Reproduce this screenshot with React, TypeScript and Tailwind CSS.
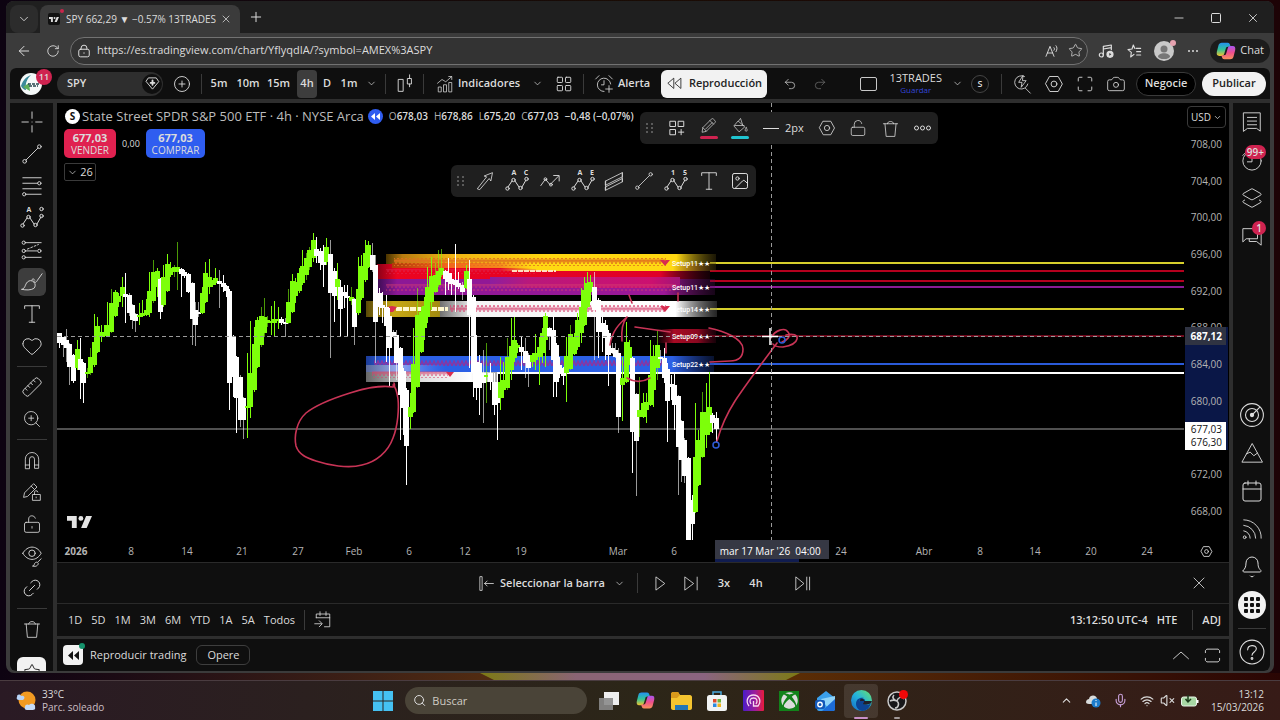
import type { ReactNode } from 'react';
import {
  ArrowLeft, Bell, Calendar, Camera, ChevronDown, ChevronUp, CirclePlus, Heart, Image, Layers2,
  LayoutGrid, Link2, LockOpen, Maximize, Mic, Minus, Plus, Redo2, RotateCw, Ruler,
  Search, Square, Star, Undo2, VolumeX, Wifi, X, ZoomIn,
} from 'lucide-react';
import { FaXbox } from 'react-icons/fa';

// x, high, body top, body bottom, low, 1 = up / 0 = down
type Candle = [number, number, number, number, number, 0 | 1];

const CANDLES: Candle[] = [
  [59, 333, 333, 343, 348, 0], [63, 337, 337, 345, 357, 0], [66, 329, 340, 348, 362, 0],
  [69, 343, 344, 367, 385, 0], [73, 354, 355, 381, 383, 0], [77, 340, 349, 368, 370, 1],
  [80, 338, 359, 370, 399, 0], [83, 362, 363, 383, 403, 0], [87, 368, 372, 374, 378, 1],
  [90, 348, 357, 373, 375, 1], [94, 314, 342, 365, 367, 1], [97, 317, 326, 352, 353, 1],
  [101, 325, 332, 337, 342, 1], [104, 325, 333, 335, 337, 1], [107, 302, 325, 336, 337, 1],
  [111, 289, 303, 332, 333, 1], [115, 290, 292, 316, 317, 1], [118, 293, 296, 302, 307, 1],
  [122, 277, 287, 296, 307, 1], [125, 273, 294, 297, 323, 0], [129, 293, 295, 313, 316, 0],
  [132, 304, 305, 320, 329, 0], [135, 313, 314, 321, 332, 0], [139, 303, 315, 317, 325, 1],
  [142, 300, 313, 316, 317, 1], [146, 299, 310, 315, 316, 1], [149, 272, 291, 313, 317, 1],
  [153, 260, 272, 301, 303, 1], [157, 268, 271, 287, 297, 1], [160, 278, 279, 312, 319, 0],
  [163, 265, 277, 305, 307, 1], [167, 254, 264, 291, 292, 1], [170, 262, 268, 275, 277, 1],
  [174, 265, 267, 272, 277, 1], [177, 242, 267, 272, 290, 1], [181, 268, 269, 274, 297, 0],
  [184, 270, 272, 276, 278, 0], [188, 273, 274, 292, 293, 0], [192, 282, 283, 319, 345, 0],
  [195, 302, 310, 325, 346, 0], [198, 302, 312, 313, 317, 0], [202, 287, 293, 313, 314, 1],
  [205, 262, 273, 302, 303, 1], [209, 259, 277, 287, 294, 1], [212, 280, 283, 285, 287, 1],
  [215, 268, 278, 283, 285, 1], [219, 270, 281, 284, 308, 0], [223, 275, 283, 287, 292, 0],
  [226, 285, 286, 291, 297, 0], [229, 289, 291, 383, 410, 0], [233, 335, 337, 377, 397, 0],
  [236, 356, 357, 398, 433, 0], [240, 375, 377, 420, 427, 0], [243, 397, 398, 420, 439, 0],
  [247, 353, 406, 408, 438, 1], [250, 321, 373, 407, 418, 1], [254, 327, 344, 390, 392, 1],
  [257, 317, 320, 367, 368, 1], [261, 307, 316, 345, 347, 1], [264, 298, 317, 333, 337, 1],
  [267, 316, 320, 323, 327, 1], [271, 306, 321, 323, 335, 1], [274, 301, 319, 323, 336, 1],
  [278, 307, 319, 321, 329, 1], [281, 317, 319, 323, 325, 0], [285, 318, 322, 324, 337, 0],
  [288, 289, 302, 323, 324, 1], [292, 274, 281, 312, 313, 1], [295, 278, 282, 296, 303, 1],
  [299, 268, 273, 291, 293, 1], [302, 250, 266, 283, 285, 1], [306, 253, 258, 275, 280, 1],
  [309, 247, 250, 267, 270, 1], [313, 233, 240, 258, 262, 1], [316, 237, 249, 256, 263, 0],
  [320, 248, 251, 263, 270, 0], [323, 245, 253, 265, 287, 0], [326, 238, 247, 262, 265, 1],
  [330, 240, 254, 293, 358, 0], [334, 268, 271, 296, 322, 0], [337, 263, 279, 287, 300, 1],
  [340, 280, 287, 309, 337, 0], [344, 285, 292, 296, 308, 0], [347, 285, 296, 298, 336, 0],
  [351, 287, 297, 301, 305, 1], [354, 298, 299, 327, 345, 0], [358, 257, 289, 313, 315, 1],
  [361, 255, 266, 298, 300, 1], [365, 240, 253, 280, 282, 1], [368, 241, 245, 267, 268, 1],
  [372, 243, 255, 270, 272, 0], [375, 255, 265, 322, 363, 0], [379, 288, 293, 307, 315, 0],
  [382, 292, 305, 308, 323, 0], [386, 295, 307, 326, 362, 0], [389, 308, 316, 348, 387, 0],
  [393, 330, 332, 337, 338, 0], [396, 330, 335, 363, 380, 0], [400, 347, 348, 395, 440, 0],
  [403, 368, 371, 408, 435, 0], [406, 388, 390, 446, 485, 0], [410, 393, 407, 417, 429, 1],
  [413, 328, 364, 412, 413, 1], [417, 288, 315, 387, 388, 1], [421, 307, 312, 352, 353, 1],
  [424, 297, 306, 328, 340, 1], [427, 267, 287, 317, 323, 1], [431, 257, 276, 302, 310, 1],
  [435, 263, 275, 292, 293, 1], [438, 250, 271, 285, 287, 1], [441, 249, 268, 275, 277, 1],
  [445, 270, 271, 279, 295, 0], [448, 258, 273, 282, 290, 0], [451, 273, 279, 284, 295, 0],
  [455, 244, 280, 285, 312, 0], [458, 272, 283, 287, 289, 0], [462, 282, 285, 292, 300, 0],
  [466, 265, 271, 288, 289, 1], [469, 260, 279, 315, 368, 0], [473, 295, 297, 373, 397, 0],
  [476, 335, 362, 388, 400, 0], [479, 355, 363, 388, 415, 0], [483, 350, 373, 383, 423, 0],
  [486, 343, 375, 377, 403, 1], [490, 363, 373, 382, 390, 0], [494, 373, 382, 405, 415, 0],
  [497, 373, 393, 403, 440, 0], [500, 357, 382, 398, 410, 1], [503, 362, 380, 390, 398, 1],
  [507, 338, 357, 388, 390, 1], [511, 318, 346, 370, 380, 1], [514, 317, 340, 358, 362, 1],
  [517, 343, 345, 348, 353, 1], [521, 337, 347, 352, 370, 0], [525, 338, 351, 363, 378, 0],
  [528, 353, 355, 368, 387, 0], [532, 353, 355, 362, 367, 1], [535, 334, 353, 360, 370, 1],
  [539, 337, 347, 357, 385, 1], [542, 328, 333, 353, 363, 1], [545, 313, 316, 340, 367, 1],
  [549, 327, 328, 337, 350, 0], [553, 316, 330, 360, 397, 0], [556, 343, 345, 382, 397, 0],
  [559, 357, 365, 373, 378, 0], [563, 367, 368, 376, 385, 0], [566, 337, 356, 373, 402, 1],
  [570, 325, 334, 369, 370, 1], [574, 333, 337, 354, 355, 1], [577, 313, 320, 347, 350, 1],
  [581, 288, 307, 333, 343, 1], [584, 277, 290, 325, 326, 1], [587, 272, 283, 307, 308, 1],
  [590, 275, 282, 292, 302, 1], [594, 272, 287, 310, 360, 0], [598, 298, 300, 332, 358, 0],
  [602, 312, 323, 332, 352, 0], [605, 320, 325, 338, 360, 0], [608, 330, 333, 355, 386, 0],
  [612, 343, 348, 353, 354, 0], [615, 343, 350, 357, 358, 0], [618, 348, 353, 417, 433, 0],
  [622, 357, 378, 385, 421, 1], [626, 322, 342, 382, 383, 1], [629, 340, 347, 363, 365, 1],
  [632, 357, 358, 432, 473, 0], [636, 393, 394, 441, 496, 0], [639, 377, 410, 417, 437, 1],
  [643, 393, 403, 417, 418, 1], [646, 393, 402, 410, 423, 1], [650, 340, 375, 405, 406, 1],
  [653, 345, 356, 390, 407, 1], [657, 330, 345, 368, 380, 1], [660, 350, 357, 359, 363, 0],
  [664, 348, 358, 378, 383, 0], [667, 363, 369, 401, 442, 0], [671, 375, 384, 387, 400, 0],
  [674, 373, 385, 405, 430, 0], [678, 395, 396, 447, 495, 0], [681, 420, 421, 460, 482, 0],
  [684, 438, 440, 476, 483, 0], [688, 457, 458, 540, 540, 0], [692, 495, 500, 524, 540, 0],
  [695, 403, 457, 512, 513, 1], [698, 430, 440, 485, 486, 1], [702, 392, 412, 457, 458, 1],
  [706, 383, 412, 435, 448, 1], [709, 372, 407, 432, 435, 1], [712, 413, 415, 423, 433, 0],
  [716, 412, 418, 429, 442, 0],
];

const LEVELS = [
  { y: 263, color: '#d6cf2c' }, { y: 271, color: '#b4001e' }, { y: 281, color: '#b4001e' },
  { y: 287, color: '#8a1c94' }, { y: 309, color: '#d6cf2c' }, { y: 336, color: '#6e0a1c' },
  { y: 364, color: '#2a5ad8' }, { y: 373, color: '#ffffff' },
];

const PRICES: [string, number][] = [
  ['708,00', 144], ['704,00', 181], ['700,00', 217], ['696,00', 254], ['692,00', 291],
  ['688,00', 327], ['684,00', 364], ['680,00', 401], ['672,00', 474], ['668,00', 511],
];

const TIMES: [string, number][] = [
  ['2026', 76], ['8', 131], ['14', 187], ['21', 242], ['27', 298], ['Feb', 354], ['6', 409],
  ['12', 465], ['19', 521], ['Mar', 618], ['6', 674], ['24', 841], ['Abr', 924], ['8', 980],
  ['14', 1035], ['20', 1091], ['24', 1147],
];

const SETUPS: [string, number][] = [
  ['Setup11★★', 266], ['Setup11★★', 290], ['Setup14★★', 312], ['Setup09★★', 339], ['Setup22★★', 367],
];

function Glyph({ children, size = 22, stroke = 1 }: { children: ReactNode; size?: number; stroke?: number }) {
  return (
    <svg className="shrink-0" width={size} height={size} viewBox="0 0 24 24" fill="none" stroke="currentColor" strokeWidth={stroke} strokeLinejoin="round" strokeLinecap="round" aria-hidden="true">
      {children}
    </svg>
  );
}

function Sep() {
  return <span className="h-5 w-px shrink-0 bg-[#3a3a3a]" />;
}

const Hexagon = ({ size = 20 }: { size?: number }) => (
  <Glyph size={size} stroke={size < 16 ? 1.6 : 1.1}><path d="M7 3h10l5 9-5 9H7l-5-9z" /><circle cx="12" cy="12" r="3.500" /></Glyph>
);
const TrendLine = ({ size = 22 }: { size?: number }) => (
  <Glyph size={size}><path d="M5.500 18.500 18.500 5.500" /><circle cx="4" cy="20" r="2" /><circle cx="20" cy="4" r="2" /></Glyph>
);
const Pattern = ({ marks }: { marks: string }) => (
  <Glyph size={24}>
    <path d="M3 18 7 12M10 12l4 6M17 18l4-7" />
    <circle cx="2.500" cy="19.500" r="1.700" /><circle cx="8.500" cy="11" r="1.700" />
    <circle cx="15.500" cy="19" r="1.700" /><circle cx="21.500" cy="10" r="1.700" />
    <g fill="currentColor" stroke="none" fontSize="7" fontWeight="bold" textAnchor="middle">
      <text x="9" y="6">{marks[0]}</text>
      {marks[1] && <text x="21" y="6">{marks[1]}</text>}
    </g>
    {!marks[1] && <circle cx="21.500" cy="3" r="1.700" />}
  </Glyph>
);
const Fib = () => (
  <Glyph><path d="M2 3h20M2 9h16M2 15h20M6 21h16" /><circle cx="20" cy="9" r="1.800" /><circle cx="3.500" cy="21" r="1.800" /></Glyph>
);
const Forecast = () => (
  <Glyph>
    <path d="M5 4h17M5 20h17M5 13h12" /><path d="M7 11l12-5" strokeDasharray="2 2" />
    <circle cx="3" cy="4" r="1.800" /><circle cx="3" cy="13" r="1.800" /><circle cx="3" cy="20" r="1.800" /><circle cx="20" cy="13" r="1.800" />
  </Glyph>
);
const BrushIcon = ({ size = 24 }: { size?: number }) => (
  <Glyph size={size}>
    <path d="M1 20c4-1 3-5 6-8 2-2 5-2 7 0 2 2 2 5 0 7-3 2-9 2-13 1z" /><path d="M14 11c1 3 3 1 4-1l5-7M12 10c0-2 2-2 3 0" />
  </Glyph>
);
const TextIcon = () => <Glyph size={22}><path d="M4 6V3h16v3M12 3v18M9 21h6" /></Glyph>;
const TrashIcon = ({ size = 20 }: { size?: number }) => (
  <Glyph size={size}><path d="M3 6h18M8 6c0-4 8-4 8 0M5 6l1.500 16h11L19 6" /></Glyph>
);
const PencilIcon = ({ size = 20 }: { size?: number }) => (
  <Glyph size={size}><path d="M3 21l1-6L16 3c1-1 2-1 3 0l2 2c1 1 1 2 0 3L9 20zM4 15l5 5M14 5l5 5M8 17l9-9" /></Glyph>
);
const Handle = () => (
  <svg width="8" height="12" viewBox="0 0 8 12" fill="#5a5a5a" aria-hidden="true">
    {[1, 5, 9].map(y => <g key={y}><rect x="0" y={y} width="2" height="2" /><rect x="5" y={y} width="2" height="2" /></g>)}
  </svg>
);

function TvLogo({ width }: { width: number }) {
  return (
    <svg width={width} viewBox="0 0 36 18" fill="currentColor" aria-hidden="true">
      <path d="M0 0h14v18H7V7H0zM28 18h-8L27.500 0H36z" /><circle cx="20" cy="3.500" r="3.500" />
    </svg>
  );
}

const CopilotIcon = ({ size = 20 }: { size?: number }) => (
  <svg width={size} height={size} viewBox="0 0 24 24" aria-hidden="true">
    <defs>
      <linearGradient id="copA" x1="0" y1="0" x2="0" y2="1"><stop stopColor="#2491f0" /><stop offset=".5" stopColor="#2fc39b" /><stop offset="1" stopColor="#f2c32c" /></linearGradient>
      <linearGradient id="copB" x1="0" y1="0" x2="0" y2="1"><stop stopColor="#a855f0" /><stop offset=".5" stopColor="#ef4f8c" /><stop offset="1" stopColor="#f9915a" /></linearGradient>
    </defs>
    <path d="M7 2h7c2 0 2.500 1.500 3 3l.5 2h-3c-2 0-2.500 1-3 3l-1.500 5c-.5 2-1.500 3-3 3H4c-3 0-3.500-2-3-5L3 5c.500-2 2-3 4-3z" fill="url(#copA)" />
    <path d="M17 22h-7c-2 0-2.500-1.500-3-3l-.5-2h3c2 0 2.500-1 3-3L14 9c.5-2 1.500-3 3-3h3c3 0 3.500 2 3 5l-2 8c-.5 2-2 3-4 3z" fill="url(#copB)" />
  </svg>
);

function TitleBar() {
  return (
    <div className="flex h-8 items-end bg-[#1f1f1f]">
      <button aria-label="Pestañas" className="ml-1 flex size-7 items-center justify-center rounded-lg bg-[#2c2c2c]"><ChevronDown size={14} strokeWidth={1.500} /></button>
      <div className="ml-0.5 flex h-7 w-50 items-center rounded-t-lg bg-[#3b3b3b] pl-2">
        <span className="relative flex size-3 items-center justify-center rounded-xs bg-[#111]">
          <TvLogo width={10} />
          <span className="absolute -top-1 -right-1 size-1 rounded-full bg-[#c8254b]" />
        </span>
        <span className="ml-1.5 flex-1 whitespace-nowrap text-[10px]">SPY 662,29 ▼ −0.57% 13TRADES</span>
        <button aria-label="Cerrar pestaña" className="mr-2"><X size={12} strokeWidth={1.500} /></button>
      </div>
      <button aria-label="Nueva pestaña" className="mb-2 ml-2"><Plus size={16} strokeWidth={1.500} /></button>
      <div className="mb-2 ml-auto flex items-center gap-6 pr-3.5">
        <button aria-label="Minimizar"><Minus size={14} strokeWidth={1.500} /></button>
        <button aria-label="Maximizar"><Square size={12} strokeWidth={2} /></button>
        <button aria-label="Cerrar"><X size={14} strokeWidth={1.500} /></button>
      </div>
    </div>
  );
}

function AddressBar() {
  return (
    <div className="flex h-[35px] items-center pr-1">
      <button aria-label="Atrás" className="ml-2.5"><ArrowLeft size={16} strokeWidth={1.500} /></button>
      <button aria-label="Recargar" className="ml-3.5"><RotateCw size={14} strokeWidth={1.500} /></button>
      <div className="ml-2.5 flex h-7 flex-1 items-center rounded-full border border-[#727272] bg-[#333] pr-1 pl-1.5">
        <Glyph size={14} stroke={1.700}><rect x="3" y="9" width="18" height="13" rx="3" /><path d="M7 9V7a5 5 0 0 1 10 0v2M12 15v1" /></Glyph>
        <input aria-label="Dirección" readOnly value="https://es.tradingview.com/chart/YflyqdIA/?symbol=AMEX%3ASPY" className="ml-1.5 flex-1 bg-transparent text-[11px] outline-none" />
        <Glyph size={16} stroke={1.400}><path d="M3 20 9 5l6 15M5 15h8M15 7c1 1 1 3 0 4M18 4c2 2 2 6 0 9" /></Glyph>
        <Star size={15} strokeWidth={1.200} className="ml-2" />
      </div>
      <div className="flex items-center gap-3 pl-2.5">
        <Glyph size={16} stroke={1.800}><path d="M8 18V5l12-2v7M8 9l12-2" /><circle cx="5" cy="18" r="3" /><circle cx="18" cy="17" r="4.500" fill="currentColor" /><path d="M17 15l3 2-3 2z" fill="#333" stroke="none" /></Glyph>
        <Glyph size={16} stroke={1.700}><path d="M15 8h7M16 13h6M16 18h6M12 17l-5 4 1-7-5-4 6-1 2-6 2 5" /></Glyph>
        <span className="relative flex size-5 items-center justify-center overflow-visible rounded-full bg-[#c9c9c9]">
          <svg width="16" height="16" viewBox="0 0 16 16" fill="#777"><circle cx="8" cy="6" r="3.500" /><path d="M2 14c0-5 12-5 12 0a9 9 0 0 1-12 0z" /></svg>
          <span className="absolute -top-px -right-0.5 size-1.5 rounded-full bg-[#e6a3b0]" />
        </span>
        <svg width="14" height="4" fill="currentColor"><circle cx="3" cy="2" r="1" /><circle cx="7" cy="2" r="1" /><circle cx="11" cy="2" r="1" /></svg>
      </div>
      <button className="ml-2.5 flex h-6 items-center gap-1 rounded-full bg-[#1c1c1c] px-1.5 text-[11px]"><CopilotIcon /> Chat</button>
    </div>
  );
}

function TopToolbar() {
  return (
    <div className="flex h-[31px] items-center rounded-t-md bg-[#0f0f0f] pr-1 text-[11px] font-semibold">
      <span className="relative ml-2.5 size-[22px] shrink-0 rounded-full bg-[#f4f8f8]">
        <svg viewBox="0 0 22 22" width="22" height="22" aria-hidden="true">
          <path d="M1 13c2-6 5-9 10-11-4 4-6 8-5 15-2 0-4-2-5-4z" fill="#3c8a9b" /><path d="M3 14l6-4 1 8z" fill="#5fae5a" />
          <path d="M8 11h11M9 13h9" stroke="#24464e" strokeWidth="1.500" strokeDasharray="3 1" />
        </svg>
        <span className="absolute -top-1 left-4 flex size-4 items-center justify-center rounded-full bg-[#cf2350] text-[9px]">11</span>
      </span>
      <button className="ml-[15px] flex h-6 w-[106px] shrink-0 items-center justify-between rounded-full bg-[#2e2e2e] pr-px pl-2.5">
        SPY
        <span className="flex size-5 items-center justify-center rounded-full bg-[#0f0f0f]">
          <Glyph size={15} stroke={1.500}><path d="M6 3h12l4 6-10 12L2 9z" /><path d="M12 7v7M9 11h6" strokeWidth="3" /></Glyph>
        </span>
      </button>
      <button aria-label="Comparar" className="flex w-[38px] shrink-0 justify-center"><CirclePlus size={18} strokeWidth={1.200} /></button>
      <Sep />
      <button className="w-[34px]">5m</button>
      <button className="w-6">10m</button>
      <button className="w-[37px]">15m</button>
      <button className="h-7 w-5 rounded-sm bg-[#3d3d3d]">4h</button>
      <button className="w-5">D</button>
      <button className="w-6">1m</button>
      <button aria-label="Intervalos" className="flex w-6 justify-center pr-1"><ChevronDown size={11} strokeWidth={1.500} /></button>
      <Sep />
      <button aria-label="Tipo de gráfico" className="flex w-[37px] justify-center">
        <Glyph size={22}><path d="M5 7h5v13H5zM15 6h4v6h-4zM17 6V2M17 12v3" /></Glyph>
      </button>
      <Sep />
      <button className="flex w-[95px] shrink-0 items-center gap-1 pl-3 whitespace-nowrap">
        <Glyph size={18}><path d="M3 22v-6h4v6zM10 22v-9h4v9zM17 22V10h4v12zM2 11l6-5 5 3 8-7M17 2h4v4" /></Glyph>
        Indicadores
      </button>
      <button aria-label="Favoritos" className="flex w-9 shrink-0 justify-center"><ChevronDown size={11} strokeWidth={1.500} /></button>
      <button aria-label="Plantillas" className="flex w-7 shrink-0 justify-start"><LayoutGrid size={18} strokeWidth={1.200} /></button>
      <Sep />
      <button className="flex w-[77px] shrink-0 items-center gap-1 pl-2.5 whitespace-nowrap">
        <Glyph size={20}><path d="M20 12a8 8 0 1 0-8 9M12 8v5H9M2 6l4-4M22 6l-4-4M18 14v8M14 18h8" /></Glyph>
        Alerta
      </button>
      <button className="flex h-7 w-[106px] shrink-0 items-center justify-center gap-1.5 rounded-md bg-[#f2f2f2] text-[#222]">
        <Glyph size={17} stroke={1.200}><path d="M11 5v14l-8-7zM21 5v14l-8-7z" /></Glyph>
        Reproducción
      </button>
      <span className="ml-1.5"><Sep /></span>
      <button aria-label="Deshacer" className="ml-2.5"><Undo2 size={14} strokeWidth={1.200} /></button>
      <button aria-label="Rehacer" className="ml-4 text-[#777]"><Redo2 size={14} strokeWidth={1.200} /></button>

      <div className="ml-auto flex items-center">
        <button aria-label="Diseño" className="mr-3 h-3.5 w-[17px] rounded-xs border border-[#c8c8c8]" />
        <button className="flex flex-col items-center font-medium">
          <span className="leading-3">13TRADES</span>
          <span className="text-[8px] leading-[11px] font-normal text-[#3346d8]">Guardar</span>
        </button>
        <ChevronDown size={11} strokeWidth={1.500} className="mr-2 ml-2.5" />
        <span className="mr-3 flex size-[18px] items-center justify-center rounded-full border border-[#444] text-[9px]">S</span>
        <Sep />
        <div className="flex items-center gap-3 px-2.5">
          <button aria-label="Búsqueda rápida"><Glyph size={20}><path d="M15 3a8 8 0 1 0 4 9M16 17l6 6M13 2l-5 8h4l-1 6 6-8h-4z" /></Glyph></button>
          <button aria-label="Ajustes"><Hexagon /></button>
          <button aria-label="Pantalla completa"><Maximize size={18} strokeWidth={1.200} /></button>
          <button aria-label="Captura"><Camera size={20} strokeWidth={1} /></button>
        </div>
        <button className="h-6 w-15 rounded-full border border-[#3a3a3a] bg-black text-center">Negocie</button>
        <button className="ml-1.5 h-6 w-16 rounded-full bg-[#f2f2f2] text-center text-[#222]">Publicar</button>
      </div>
    </div>
  );
}

function Tool({ label, active, children }: { label: string; active?: boolean; children: ReactNode }) {
  return (
    <button aria-label={label} className="flex h-8 w-full shrink-0 items-center justify-center">
      {active ? <span className="flex size-7 items-center justify-center rounded-md bg-[#3d3d3d]">{children}</span> : children}
    </button>
  );
}

function LeftTools() {
  const rule = <span className="my-1 h-px w-[30px] shrink-0 bg-[#3a3a3a]" />;
  return (
    <aside className="flex w-[43px] shrink-0 flex-col items-center overflow-hidden rounded-bl-md bg-[#0f0f0f] pt-[3px]">
      <Tool label="Cruz"><Glyph><path d="M12 1v7M12 16v7M1 12h7M16 12h7M12 12h.1" /></Glyph></Tool>
      <Tool label="Línea de tendencia"><TrendLine /></Tool>
      <Tool label="Fibonacci"><Fib /></Tool>
      <Tool label="Patrones"><Pattern marks="A" /></Tool>
      <Tool label="Previsión"><Forecast /></Tool>
      <Tool label="Pincel" active><BrushIcon size={22} /></Tool>
      <Tool label="Texto"><TextIcon /></Tool>
      <Tool label="Iconos"><Heart size={22} strokeWidth={1} /></Tool>
      {rule}
      <Tool label="Medir"><Ruler size={22} strokeWidth={1} className="-scale-x-100" /></Tool>
      <Tool label="Acercar"><ZoomIn size={20} strokeWidth={1} /></Tool>
      {rule}
      <Tool label="Imán"><Glyph size={20}><path d="M4 22V11a8 8 0 0 1 16 0v11h-5V11a3 3 0 0 0-6 0v11zM4 18h5M15 18h5" /></Glyph></Tool>
      <Tool label="Modo dibujo"><Glyph size={20}><path d="M2 18l1-5L14 2l4 4L7 17zM11 5l4 4M13 15h9v7h-9zM15 15v-2a2 2 0 0 1 4-1M17 18v1" /></Glyph></Tool>
      <Tool label="Bloquear"><Glyph size={20}><rect x="3" y="10" width="18" height="12" rx="2" /><path d="M8 10V6c0-5 7-5 8-1M12 15v2" /></Glyph></Tool>
      <Tool label="Ocultar"><Glyph size={22}><path d="M2 9c5-9 15-9 20 0-5 9-15 9-20 0z" /><circle cx="12" cy="9" r="3.500" /><path d="M13 23c2 0 1-3 3-4s4 1 2 3-3 1-5 1zM19 18l3-3" /></Glyph></Tool>
      <Tool label="Sincronizar"><Link2 size={22} strokeWidth={1} className="-rotate-45" /></Tool>
      {rule}
      <Tool label="Eliminar"><TrashIcon /></Tool>
      <button aria-label="Favoritos" className="mt-3 flex h-7 w-[29px] shrink-0 justify-center rounded-md bg-[#f2f2f2] pt-1.5 text-[#111]"><Star size={18} strokeWidth={1.200} /></button>
    </aside>
  );
}

function SideItem({ label, badge, children }: { label: string; badge?: string; children: ReactNode }) {
  return (
    <button aria-label={label} className="relative flex h-[38px] w-full shrink-0 items-center justify-center">
      {children}
      {badge && <span className="absolute top-1 right-1 flex h-3.5 min-w-3.5 items-center justify-center rounded-full bg-[#cf2350] px-0.5 text-[10px] font-semibold">{badge}</span>}
    </button>
  );
}

function RightTools() {
  return (
    <aside className="flex w-[37px] shrink-0 flex-col items-center rounded-br-md bg-[#0f0f0f]">
      <SideItem label="Lista"><Glyph><path d="M3 2h18v20l-4-3h-10l-4 3zM7 7h10M7 11h10M7 15h10" /></Glyph></SideItem>
      <SideItem label="Alertas" badge="99+"><Glyph><circle cx="12" cy="13" r="10" /><path d="M12 8v6H7M2 7l5-5" /></Glyph></SideItem>
      <SideItem label="Capas"><Layers2 size={22} strokeWidth={1} /></SideItem>
      <SideItem label="Chats" badge="1"><Glyph><path d="M2 18V4h16v11H6zM9 15v3h8l5 4V9h-4" /></Glyph></SideItem>
      <span className="flex-1" />
      <SideItem label="Radar"><Glyph size={26}><circle cx="12" cy="12" r="10.500" /><circle cx="12" cy="12" r="6" /><circle cx="12" cy="12" r="1.500" fill="currentColor" /><path d="M12 12l7-7" /></Glyph></SideItem>
      <SideItem label="Pine"><Glyph><path d="M12 2 1 22h22zM6 13l4-2 4 4 4-3" /></Glyph></SideItem>
      <SideItem label="Calendario"><Calendar size={24} strokeWidth={1} /></SideItem>
      <SideItem label="Noticias"><Glyph><path d="M3 2a19 19 0 0 1 19 20M3 8a14 14 0 0 1 13 14M3 14a8 8 0 0 1 7 8" /><circle cx="4" cy="21" r="1.500" /></Glyph></SideItem>
      <SideItem label="Notificaciones"><Bell size={24} strokeWidth={1} /></SideItem>
      <SideItem label="Aplicaciones">
        <svg width="28" height="28" viewBox="0 0 28 28"><circle cx="14" cy="14" r="14" fill="#f2f2f2" />
          {[8, 14, 20].map(y => [8, 14, 20].map(x => <rect key={`${x}-${y}`} x={x - 2} y={y - 2} width="4" height="4" rx="1" fill="#111" />))}
        </svg>
      </SideItem>
      <span className="my-1 h-px w-7 shrink-0 bg-[#3a3a3a]" />
      <SideItem label="Ayuda"><Glyph size={26}><circle cx="12" cy="12" r="11" /><path d="M8 10c0-5 8-5 8-1 0 3-4 3-4 6" /><circle cx="12" cy="18" r=".800" /></Glyph></SideItem>
    </aside>
  );
}

function Plot() {
  return (
    <svg className="block h-full w-full" aria-label="SPY 4h">
      <defs>
        <pattern id="zigPink" width="4" height="8" patternUnits="userSpaceOnUse"><path d="M0 6 2 1 4 6M0 8 2 4 4 8" stroke="#d8406e" fill="none" /></pattern>
        <pattern id="zigOrange" width="4" height="8" patternUnits="userSpaceOnUse"><path d="M0 6 2 1 4 6M0 8 2 4 4 8" stroke="#e0701c" fill="none" /></pattern>
        <pattern id="zigViolet" width="4" height="8" patternUnits="userSpaceOnUse"><path d="M0 6 2 1 4 6" stroke="#8a35a0" strokeWidth="1.500" fill="none" /></pattern>
        <linearGradient id="gold"><stop stopColor="#4a3400" /><stop offset=".05" stopColor="#b87c10" /><stop offset=".2" stopColor="#f0b414" /><stop offset=".5" stopColor="#ffd812" /><stop offset=".88" stopColor="#ffd812" /><stop offset="1" stopColor="#5a4c10" stopOpacity=".3" /></linearGradient>
        <linearGradient id="goldEnd"><stop stopColor="#ffd812" stopOpacity="0" /><stop offset=".15" stopColor="#ffd812" /><stop offset=".8" stopColor="#ffd812" /><stop offset="1" stopColor="#5a4c10" stopOpacity=".3" /></linearGradient>
        <linearGradient id="orange"><stop stopColor="#b03c08" /><stop offset=".4" stopColor="#f4641c" /><stop offset="1" stopColor="#f4a01c" /></linearGradient>
        <linearGradient id="red"><stop stopColor="#8a0018" /><stop offset=".06" stopColor="#ec0420" /><stop offset=".85" stopColor="#e00028" /><stop offset="1" stopColor="#60001c" stopOpacity=".2" /></linearGradient>
        <linearGradient id="purple"><stop stopColor="#3c0c54" /><stop offset=".06" stopColor="#8c1896" /><stop offset=".85" stopColor="#9c1896" /><stop offset="1" stopColor="#4c1050" stopOpacity=".3" /></linearGradient>
        <linearGradient id="magenta"><stop stopColor="#8c1ea0" /><stop offset=".2" stopColor="#b8187c" /><stop offset=".85" stopColor="#cc1070" /><stop offset="1" stopColor="#a01478" /></linearGradient>
        <linearGradient id="olive"><stop stopColor="#5a4a08" /><stop offset=".3" stopColor="#c8a814" /><stop offset=".8" stopColor="#a48c10" /><stop offset="1" stopColor="#6e6e6e" /></linearGradient>
        <linearGradient id="white"><stop stopColor="#707070" /><stop offset=".12" stopColor="#f4f4f4" /><stop offset=".85" stopColor="#fff" /><stop offset="1" stopColor="#777" stopOpacity=".3" /></linearGradient>
        <linearGradient id="blue"><stop stopColor="#1c3c98" /><stop offset=".06" stopColor="#2c60e6" /><stop offset=".88" stopColor="#2c60e6" /><stop offset="1" stopColor="#1c3c98" stopOpacity=".3" /></linearGradient>
        <linearGradient id="haze"><stop stopColor="#5a6a9a" /><stop offset=".4" stopColor="#98acf0" /><stop offset="1" stopColor="#5880ee" stopOpacity="0" /></linearGradient>
        <linearGradient id="gray"><stop stopColor="#686868" /><stop offset=".35" stopColor="#d8d8d8" /><stop offset=".8" stopColor="#fff" /><stop offset="1" stopColor="#aaa" /></linearGradient>
        <linearGradient id="wine"><stop stopColor="#70001c" stopOpacity="0" /><stop offset=".3" stopColor="#a80a24" /><stop offset=".7" stopColor="#8a0820" /><stop offset="1" stopColor="#50041c" stopOpacity=".3" /></linearGradient>
      </defs>
      <g transform="translate(-57 -103)">
        <g shapeRendering="crispEdges">
          <rect x="57" y="428" width="4000" height="2" fill="#505050" />
          {LEVELS.map(l => <rect key={l.y} x="710" y={l.y - 1} width="4000" height="2" fill={l.color} />)}
        </g>
        {/* zone bands */}
        <rect x="377" y="264" width="333" height="15" fill="url(#red)" />
        <rect x="386" y="254" width="330" height="10" fill="url(#gold)" />
        <rect x="392" y="263" width="140" height="5" fill="url(#orange)" />
        <rect x="500" y="263" width="216" height="8" fill="url(#goldEnd)" />
        <rect x="394" y="258" width="272" height="8" fill="url(#zigOrange)" />
        <rect x="386" y="269" width="150" height="5" fill="url(#zigPink)" opacity=".4" />
        <path d="M512 271h44" stroke="#ffe0c0" strokeWidth="2" strokeDasharray="5 1" />
        <rect x="377" y="279" width="338" height="16" fill="url(#purple)" />
        <rect x="490" y="277" width="190" height="11" fill="url(#magenta)" />
        <rect x="386" y="284" width="290" height="7" fill="url(#zigPink)" opacity=".5" />
        <rect x="366" y="301" width="90" height="16" fill="url(#olive)" />
        <rect x="440" y="301" width="277" height="16" fill="url(#white)" />
        <path d="M396 309h52" stroke="#fff8d0" strokeWidth="4" strokeDasharray="6 1" />
        <path d="M387 307l5-1 5 1-4 5h-3z" fill="#d82c50" />
        <rect x="450" y="305" width="216" height="8" fill="url(#zigPink)" opacity=".8" />
        <rect x="366" y="356" width="348" height="16" fill="url(#blue)" />
        <rect x="374" y="359" width="292" height="7" fill="url(#zigViolet)" />
        <rect x="366" y="365" width="80" height="8" fill="url(#haze)" />
        <rect x="366" y="372" width="131" height="10" fill="url(#gray)" />
        <rect x="372" y="371" width="76" height="7" fill="url(#zigPink)" opacity=".7" />
        <rect x="656" y="329" width="60" height="14" fill="url(#wine)" />
        <path d="M497 373H712" stroke="#fff" strokeWidth="2" />
        <g fill="#d82c50">
          <path d="M660 260h4l1 1 1-1h4l-5 6z" /><path d="M660 306h4l1 1 1-1h4l-5 6z" /><path d="M446 372h8l-4 5z" />
        </g>
        <g fill="#fff" fontSize="7" fontWeight="500" fontFamily="Roboto, sans-serif">
          {SETUPS.map(([name, y]) => <text key={y} x="672" y={y}>{name}</text>)}
        </g>
        <g shapeRendering="crispEdges">
          {CANDLES.map(([x, high, top, bottom, low, up]) => (
            <g key={x} fill={up ? '#7dff0a' : '#fff'}>
              <rect x={x} y={high} width="1" height={low - high} opacity={x % 3 === 0 ? 0.6 : 1} />
              <rect x={x - 2} y={top} width="5" height={Math.max(bottom - top, 2)} />
            </g>
          ))}
        </g>
        {/* freehand strokes */}
        <g fill="none" stroke="#c83456" strokeWidth="1.600" strokeLinecap="round">
          <path d="M394 383c1 2 1 3-1 4-14-2-27 1-43 6-16 5-34 12-44 20-10 9-12 24-10 33 3 9 11 12 20 15 12 4 32 8 46 4 14-3 26-13 31-27 5-12 6-30 5-39-1-7-2-12-5-14" />
          <path d="M635 327l35 5M709 328c14 3 34 10 34 21 0 9-5 12-13 12l-20 1" />
          <path d="M627 317c-8 7-15 14-17 28M627 317c-5 6-6 13-5 24M629 295l3 8M678 293v8M666 343v10M627 378c8 5 16 4 23 0" />
          <path d="M717 441c4-14 9-26 18-40 12-18 27-38 42-58M771 338c4-8 14-11 17-6 3 4 0 8-6 10M786 335c7-2 12 0 11 4-1 5-8 7-14 8-5 0-9-1-10-3" />
        </g>
        <g fill="none" stroke="#2f5bd6" strokeWidth="1.500"><circle cx="716" cy="445" r="3" /><circle cx="782" cy="340" r="3" /></g>
        <g stroke="#9a9a9a" strokeDasharray="4 3" shapeRendering="crispEdges">
          <path d="M57 336.500H4000" /><path d="M771.500 103V600" />
        </g>
        <path d="M770 328v17M762 336.500h16" stroke="#fff" strokeWidth="1.500" />
      </g>
    </svg>
  );
}

function Chart() {
  return (
    <section className="relative grid min-h-0 flex-1 grid-cols-[1fr_45px] grid-rows-[1fr_22px] overflow-hidden bg-black">
      <Plot />
      <svg className="h-full w-full" aria-label="Escala de precios">
        <g transform="translate(-1184 -103)" fontSize="10" fill="#b4b4b4">
          <rect x="1185" y="327" width="43" height="123" fill="#0a1747" />
          {PRICES.map(([label, y]) => <text key={label} x="1222" y={y + 4} textAnchor="end">{label}</text>)}
          <rect x="1185" y="327" width="41" height="18" fill="#2f3342" />
          <text x="1222" y="340" textAnchor="end" fill="#fff" fontWeight="bold">687,12</text>
          <rect x="1185" y="422" width="41" height="28" fill="#fff" />
          <text x="1222" y="433" textAnchor="end" fill="#111">677,03</text>
          <text x="1222" y="446" textAnchor="end" fill="#111">676,30</text>
        </g>
      </svg>
      <svg className="h-full w-full" aria-label="Escala de tiempo">
        <g transform="translate(-57 -540)" fontSize="10" textAnchor="middle" fill="#b4b4b4">
          {TIMES.map(([label, x]) => <text key={x} x={x} y="555" fontWeight={label === '2026' ? 700 : 400}>{label}</text>)}
          <rect x="715" y="559" width="84" height="3" fill="#101c50" />
          <rect x="715" y="540" width="114" height="19" fill="#363844" />
          <text x="755" y="555" fill="#fff" fontWeight="500">mar 17 Mar '26</text>
          <text x="808" y="555" fill="#fff" fontWeight="500">04:00</text>
        </g>
      </svg>
      <button aria-label="Ajustes de la escala" className="flex items-center justify-center"><Hexagon size={13} /></button>

      {/* legend */}
      <div className="absolute top-1 left-2 flex items-center text-[11px] whitespace-nowrap">
        <span className="flex size-[15px] items-center justify-center rounded-full bg-white text-[10px] font-bold text-[#111]">S</span>
        <h1 className="ml-0.5 text-[13px] text-[#bcbcbc]">State Street SPDR S&amp;P 500 ETF · 4h · NYSE Arca</h1>
        <span className="ml-1 flex size-[15px] items-center justify-center rounded-full bg-[#2f5df0]">
          <svg width="9" height="7" viewBox="0 0 9 7" fill="#fff"><path d="M4 0v7L0 3.500zM9 0v7L5 3.500z" /></svg>
        </span>
        <p className="ml-1.5 flex gap-1.5 text-[10px] font-semibold">
          {['O678,03', 'H678,86', 'L675,20', 'C677,03'].map(v => <span key={v}><span className="font-normal text-[#b0b0b0]">{v[0]}</span>{v.slice(1)}</span>)}
          <span>−0,48 (−0,07%)</span>
        </p>
      </div>
      <div className="absolute top-[26px] left-[7px] flex items-center text-center text-[10px] leading-3">
        <button className="h-[29px] w-[52px] rounded-[5px] bg-[#e02150]"><b className="block text-[11px]">677,03</b>VENDER</button>
        <span className="w-[30px] text-[9px]">0,00</span>
        <button className="h-[29px] w-[59px] rounded-[5px] bg-[#2f5df0]"><b className="block text-[11px]">677,03</b>COMPRAR</button>
      </div>
      <button className="absolute top-[60px] left-[7px] flex h-[18px] w-8 items-center justify-center gap-0.5 rounded-xs border border-[#3a3a3a] text-[11px]">
        <ChevronDown size={11} strokeWidth={1.500} />26
      </button>
      <span className="absolute bottom-[34px] left-2.5 text-[#e4e4e4]"><TvLogo width={25} /></span>
      <button className="absolute top-[3px] right-[3px] flex h-[22px] w-[39px] items-center justify-between rounded-sm border border-[#3a3a3a] bg-black px-[3px] text-[10px]">
        USD <ChevronDown size={9} strokeWidth={2} />
      </button>

      {/* drawing properties */}
      <div className="absolute top-[9px] left-[583px] flex h-8 w-[298px] items-center justify-between rounded-md bg-[#1f1f1f] pr-[7px] pl-1.5 text-[11px] font-medium">
        <Handle />
        <button aria-label="Plantillas"><Glyph size={18} stroke={1.300}><path d="M3 3h7v7H3zM14 3h7v7h-7zM3 14h7v7H3zM17.500 14v7M14 17.500h7" /></Glyph></button>
        <button aria-label="Color de línea" className="flex flex-col items-center"><PencilIcon size={17} /><span className="mt-0.5 h-[3px] w-[18px] rounded-full bg-[#cf2350]" /></button>
        <button aria-label="Color de fondo" className="flex flex-col items-center">
          <Glyph size={17}><path d="M9 6l9 8-8 7-7-8zM9 6l3-4 3 9M20 15c2 3 2 5 0 5s-2-2 0-5zM4 12h13" /></Glyph><span className="mt-0.5 h-[3px] w-[18px] rounded-full bg-[#20c4d0]" />
        </button>
        <button className="flex items-center gap-1.5"><span className="h-px w-4 bg-[#ddd]" />2px</button>
        <button aria-label="Ajustes"><Hexagon size={18} /></button>
        <button aria-label="Bloquear"><LockOpen size={18} strokeWidth={1} /></button>
        <button aria-label="Eliminar"><TrashIcon size={19} /></button>
        <button aria-label="Más"><svg width="17" height="6" fill="none" stroke="currentColor"><circle cx="2.500" cy="3" r="2" /><circle cx="8.500" cy="3" r="2" /><circle cx="14.500" cy="3" r="2" /></svg></button>
      </div>
      {/* favourite tools */}
      <div className="absolute top-[62px] left-[394px] flex h-8 w-[305px] items-center justify-between rounded-md bg-[#1f1f1f] px-1.5">
        <Handle />
        <button aria-label="Flecha"><Glyph size={20}><path d="M3 21l11-14-3-1 10-4-2 10-2-3L6 22z" /></Glyph></button>
        <button aria-label="Corrección"><Pattern marks="AC" /></button>
        <button aria-label="Zigzag"><Glyph><path d="M2 17l5-7 5 6 9-9M16 6h6v6" /><circle cx="7" cy="10" r="1.500" /><circle cx="13" cy="16" r="1.500" /></Glyph></button>
        <button aria-label="Triángulo"><Pattern marks="AE" /></button>
        <button aria-label="Canal"><Glyph size={20}><path d="M2 12 22 2v5L2 17zM2 19 22 9v4L2 23zM2 12v11M22 2v11" /></Glyph></button>
        <button aria-label="Línea"><TrendLine size={20} /></button>
        <button aria-label="Impulso"><Pattern marks="15" /></button>
        <button aria-label="Texto"><TextIcon /></button>
        <button aria-label="Imagen"><Image size={20} strokeWidth={1.200} /></button>
      </div>
    </section>
  );
}

function ReplayBar() {
  return (
    <div className="relative flex h-[41px] shrink-0 items-center justify-center border-t border-[#2a2a2a] bg-[#0f0f0f] pl-1 text-[11px] font-semibold">
      <button className="flex w-[158px] items-center justify-between whitespace-nowrap">
        <span className="flex items-center gap-1.5">
          <Glyph size={15} stroke={1.300}><path d="M2 1h3v22H2zM23 12H9M13 8l-4 4 4 4" /></Glyph>
          Seleccionar la barra
        </span>
        <ChevronDown size={11} strokeWidth={1.500} className="mr-3" />
      </button>
      <Sep />
      <button aria-label="Reproducir" className="ml-3.5"><Glyph size={17} stroke={1.200}><path d="M6 3l12 9-12 9z" /></Glyph></button>
      <button aria-label="Adelante" className="ml-3.5"><Glyph size={17} stroke={1.200}><path d="M3 3l12 9-12 9zM20 3v18" /></Glyph></button>
      <button className="ml-2.5 w-7">3x</button>
      <button className="ml-1 w-7">4h</button>
      <span className="ml-2.5"><Sep /></span>
      <button aria-label="Tiempo real" className="ml-3.5"><Glyph size={17} stroke={1.200}><path d="M3 3l11 9-11 9zM18 3v18M22 3v18" /></Glyph></button>
      <button aria-label="Cerrar reproducción" className="absolute right-5"><X size={20} strokeWidth={1} /></button>
    </div>
  );
}

function RangeBar() {
  return (
    <div className="flex h-[33px] shrink-0 items-center border-t border-[#2a2a2a] bg-[#0f0f0f] pr-2 pl-[11px] text-[11px] font-semibold">
      <div className="flex items-center gap-[9px] font-medium">
        {['1D', '5D', '1M', '3M', '6M', 'YTD', '1A', '5A', 'Todos'].map(r => <button key={r}>{r}</button>)}
        <Sep />
        <button aria-label="Ir a"><Glyph size={18} stroke={1.100}><path d="M3 9V4h18v17h-7M3 9h18M8 1v5M16 1v5M1 17h9M7 13l4 4-4 4" /></Glyph></button>
      </div>
      <div className="ml-auto flex items-center gap-[9px]">
        <button>13:12:50 UTC-4</button>
        <button>HTE</button>
        <span className="ml-1.5 h-5 w-px bg-[#3a3a3a]" />
        <button>ADJ</button>
      </div>
    </div>
  );
}

function TradingBar() {
  return (
    <div className="mt-[3px] flex h-8 shrink-0 items-center bg-[#0f0f0f] pr-2 pl-1.5 text-[11px] font-medium">
      <span className="relative flex size-5 items-center justify-center rounded-sm bg-[#f2f2f2]">
        <svg width="11" height="9" viewBox="0 0 11 9" fill="#111"><path d="M5 0v9L0 4.500zM11 0v9L6 4.500z" /></svg>
        <span className="absolute -top-0.5 -right-0.5 size-1.5 rounded-full bg-[#15936c]" />
      </span>
      <span className="ml-[7px]">Reproducir trading</span>
      <button className="ml-2.5 h-5 w-[54px] rounded-md border border-[#3e3e3e]">Opere</button>
      <div className="ml-auto flex items-center gap-3.5">
        <button aria-label="Abrir panel"><Glyph size={18} stroke={1.200}><path d="M2 17l10-9 10 9" /></Glyph></button>
        <button aria-label="Maximizar panel"><Glyph size={17} stroke={1.300}><path d="M2 8V5l2-2h16l2 2v3M2 16v3l2 2h16l2-2v-3" /></Glyph></button>
      </div>
    </div>
  );
}

const TASK = 'relative flex h-9 w-9 items-center justify-center';

function Taskbar() {
  return (
    <footer className="grid h-10 shrink-0 grid-cols-[1fr_auto_1fr] items-center border-t border-[#4a3c40] bg-linear-to-r from-[#2a1a24] via-[#2c2618] to-[#371b17] text-[10px] leading-[13px]">
      <div className="flex items-center pl-4">
        <svg width="22" height="22" viewBox="0 0 22 22" aria-hidden="true">
          <circle cx="11" cy="10" r="8.500" fill="#f19a22" /><path d="M1 7c0-3 3-3 4-1 3-1 5 2 2 4H3C1 10 0 8 1 7z" fill="#b8d4f8" />
          <path d="M9 17c0-3 3-3 4-2 3-3 7 0 6 2 1 3-2 3-3 3h-5c-2 0-3-2-2-3z" fill="#c4dcfa" />
        </svg>
        <p className="ml-1">33°C<br /><span className="text-[#cbbfc4]">Parc. soleado</span></p>
      </div>
      <nav className="flex items-center">
        <button aria-label="Inicio" className={TASK}>
          <svg width="20" height="20" viewBox="0 0 20 20" fill="#45c1f2"><path d="M0 0h9.500v9.500H0zM10.500 0H20v9.500h-9.500zM0 10.500h9.500V20H0zM10.500 10.500H20V20h-9.500z" /></svg>
        </button>
        <label className="mx-1 flex h-[27px] w-[182px] items-center rounded-full bg-[#4a4438] pl-2">
          <Search size={15} strokeWidth={1.800} />
          <input aria-label="Buscar" placeholder="Buscar" className="ml-1.5 w-full bg-transparent text-[11px] outline-none placeholder:text-[#d0ccc4]" />
        </label>
        <button aria-label="Vista de tareas" className={TASK}><svg width="20" height="18" viewBox="0 0 20 18"><rect x="5" width="15" height="13" fill="#eee" /><rect y="6" width="14" height="12" fill="#8a8a8a" opacity=".9" /></svg></button>
        <button aria-label="Copilot" className={TASK}><CopilotIcon size={19} /></button>
        <button aria-label="Explorador" className={TASK}><svg width="21" height="18" viewBox="0 0 21 18"><path d="M0 2c0-1 1-2 2-2h5l2 3h10c1 0 2 1 2 2v11c0 1-1 2-2 2H2c-1 0-2-1-2-2z" fill="#f4c430" /><path d="M0 2c0-1 1-2 2-2h5l2 3-3 3H0z" fill="#d99a1c" /><path d="M4 13h13v5H4z" fill="#2276b8" /></svg></button>
        <button aria-label="Tienda" className={TASK}>
          <svg width="20" height="20" viewBox="0 0 20 20"><path d="M6 5V1h8v4" fill="none" stroke="#4aa8dc" strokeWidth="1.500" /><rect y="4" width="20" height="16" rx="2.500" fill="#f2f4f4" /><path d="M6 8h3.500v3.500H6z" fill="#e04a2c" /><path d="M10.500 8H14v3.500h-3.500z" fill="#6cb33c" /><path d="M6 12.500h3.500V16H6z" fill="#2c8ae0" /><path d="M10.500 12.500H14V16h-3.500z" fill="#f0b41c" /></svg>
        </button>
        <button aria-label="Huella" className={TASK}>
          <svg width="21" height="21" viewBox="0 0 21 21"><defs><linearGradient id="fp"><stop stopColor="#4a1cc8" /><stop offset=".6" stopColor="#a01c98" /><stop offset="1" stopColor="#e81c3c" /></linearGradient></defs><rect width="21" height="21" rx="1" fill="url(#fp)" /><path d="M6 16c-4-5-1-11 4.500-11S19 11 15 16h-2M8 14c-2-3-1-6 2.500-6s4.500 3 2.500 6M10.500 11v5h5" fill="none" stroke="#f8d8f0" strokeWidth="1.300" /></svg>
        </button>
        <button aria-label="Xbox" className={TASK}><span className="flex size-5 items-center justify-center bg-[#12821a]"><FaXbox size={17} /></span></button>
        <button aria-label="Correo" className={TASK}>
          <svg width="21" height="20" viewBox="0 0 21 20"><path d="M2 7 11 0l9 7v11c0 1-1 2-2 2H4c-1 0-2-1-2-2z" fill="#3aa0ec" /><path d="M6 8 20 5v9l-7 3z" fill="#8fd4fa" /><path d="M20 8v10c0 1-1 2-2 2H7z" fill="#1c6cd8" /><rect y="9" width="10" height="9" rx="2" fill="#1458b8" /><circle cx="5" cy="13.500" r="2.200" fill="none" stroke="#fff" strokeWidth="1.400" /></svg>
        </button>
        <button aria-label="Edge" className={TASK}>
          <span className="absolute inset-px rounded-sm bg-white/10" />
          <svg width="21" height="21" viewBox="0 0 21 21" className="relative">
            <defs><linearGradient id="edge" x1="0" y1="1" x2="1" y2="0"><stop stopColor="#1468c8" /><stop offset=".5" stopColor="#24b4dc" /><stop offset="1" stopColor="#6ce468" /></linearGradient></defs>
            <circle cx="10.500" cy="10.500" r="10.500" fill="url(#edge)" /><path d="M8 12c0-3 3-5 5-3 2 1 1 4 0 5 3 2 6 0 7-1-1 5-5 8-9 8-4-1-6-4-6-7 0-5 4-7 8-6-3 0-5 1-5 4z" fill="#0c4494" /><path d="M9 11c0-3 4-3 4 0 0 2-1 2-1 3 2 1 5 1 8-1l1-2H9z" fill="#20202a" />
          </svg>
          <span className="absolute bottom-0 h-0.5 w-3.5 rounded-full bg-[#c890c8]" />
        </button>
        <button aria-label="OBS" className={TASK}>
          <svg width="21" height="21" viewBox="0 0 21 21"><circle cx="10" cy="11" r="9" fill="#17171a" stroke="#c8c8c8" strokeWidth="1.500" /><path d="M10 11c-4-1-5-4-3-6M10 11c1-4 5-5 7-2M10 11c3 3 1 7-2 7M3 11c2-1 5-1 7 0" stroke="#c8c8c8" strokeWidth="1.500" fill="none" /><circle cx="16.500" cy="4.500" r="4.500" fill="#f00808" /></svg>
          <span className="absolute bottom-0 h-0.5 w-1.5 rounded-full bg-[#a09898]" />
        </button>
      </nav>
      <div className="flex items-center justify-end pr-4">
        <ChevronUp size={13} strokeWidth={2} />
        <svg width="16" height="14" viewBox="0 0 16 14" className="ml-3"><path d="M1 8c0-2 2-3 3-3 1-5 8-4 8 0 4 1 3 5 0 5H4c-2 0-3-1-3-2z" fill="#d8dcdc" /><circle cx="11" cy="9" r="4.500" fill="#1c7ccc" /><path d="M11 8.500V12M11 6v1" stroke="#fff" /></svg>
        <Mic size={15} strokeWidth={1.800} className="mx-3 text-[#c8a0d8]" />
        <Wifi size={14} strokeWidth={2} />
        <VolumeX size={15} strokeWidth={1.800} className="mx-1.5" />
        <svg width="18" height="12" viewBox="0 0 18 12"><rect x=".5" y="2" width="15" height="9" rx="2" fill="#a8d8a4" stroke="#e8f4e8" /><path d="M16.500 5v3" stroke="#fff" strokeWidth="2" /><path d="M7 0v6M4.500 4 7 7l3-3" stroke="#1c3c1c" strokeWidth="1.500" fill="none" /></svg>
        <p className="ml-3 text-right">13:12<br />15/03/2026</p>
      </div>
    </footer>
  );
}

export default function App() {
  return (
    <div className="flex h-screen flex-col overflow-hidden bg-linear-to-r from-[#0d0311] via-[#1a0c04] to-[#1d0306] font-['Open_Sans',sans-serif] text-[#dcdcdc]">
      <div className="mx-1.5 mt-px flex min-h-0 flex-1 flex-col overflow-hidden rounded-lg bg-[#3b3b3b]">
        <TitleBar />
        <AddressBar />
        <main className="mx-1 mb-0.5 flex min-h-0 flex-1 flex-col gap-1 overflow-hidden rounded-md bg-[#2e2e2e]">
          <TopToolbar />
          <div className="flex min-h-0 flex-1 gap-1">
            <LeftTools />
            <div className="flex min-w-0 flex-1 flex-col">
              <Chart />
              <ReplayBar />
              <RangeBar />
              <TradingBar />
            </div>
            <RightTools />
          </div>
        </main>
      </div>
      <div className="flex h-[7px] shrink-0 justify-center bg-linear-to-r from-[#0d0311] via-[#6a3a04] to-[#2a0604]">
        <svg width="320" height="7" preserveAspectRatio="none" viewBox="0 0 320 7" aria-hidden="true">
          <defs><linearGradient id="glow"><stop stopColor="#7c7a14" /><stop offset=".3" stopColor="#8a6474" /><stop offset=".7" stopColor="#8a6480" /><stop offset="1" stopColor="#7c7a14" /></linearGradient></defs>
          <path d="M0 0h320l-14 7H14z" fill="url(#glow)" />
        </svg>
      </div>
      <Taskbar />
    </div>
  );
}
